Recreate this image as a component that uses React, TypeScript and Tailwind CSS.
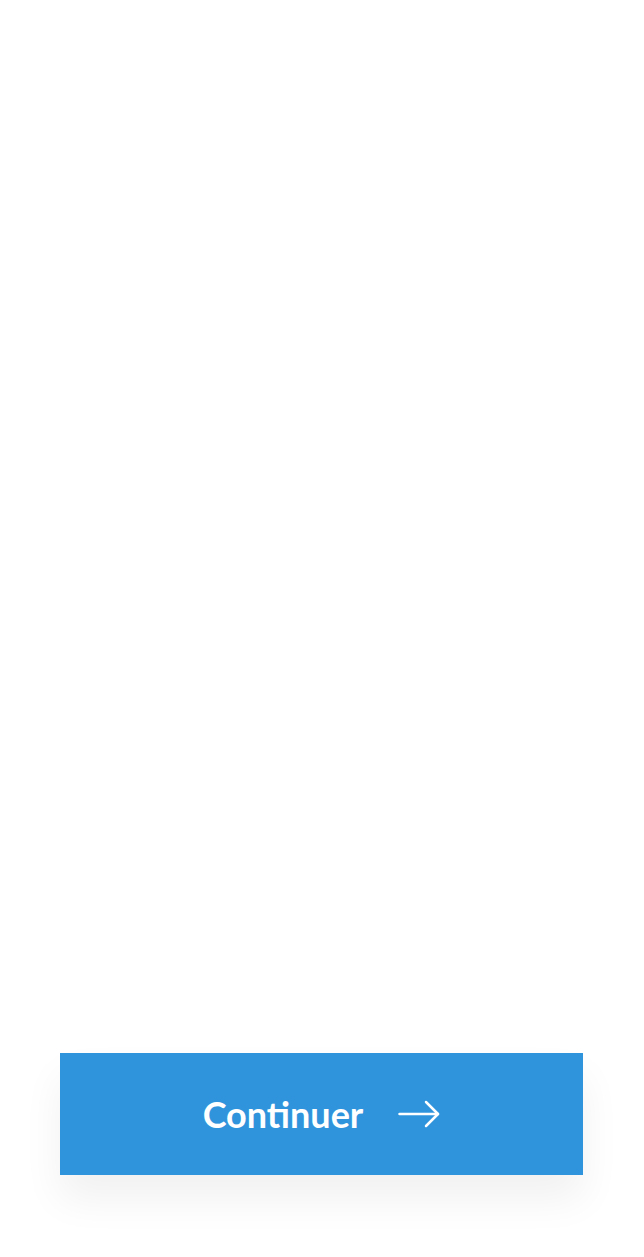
export default function App() {
  return (
    <div className="flex h-[1257px] w-full flex-col bg-white font-['Lato','Noto_Sans',sans-serif]">
      <div className="flex-1" />
      <div className="pb-[82px] pl-[60px] pr-[61px]">
        <button
          type="button"
          className="flex h-[122px] w-full items-center justify-center gap-[35px] bg-[#3094dc] text-white shadow-[0_24px_40px_rgba(0,0,0,0.06)]"
        >
          <span className="text-[36px] font-bold leading-none">Continuer</span>
          <svg
            width="42"
            height="28"
            viewBox="0 0 42 28"
            fill="none"
            stroke="currentColor"
            strokeWidth="2.5"
            strokeLinecap="round"
            strokeLinejoin="round"
          >
            <path d="M1.5 14h38.5" />
            <path d="M28 2l12 12-12 12" />
          </svg>
        </button>
      </div>
    </div>
  );
}
